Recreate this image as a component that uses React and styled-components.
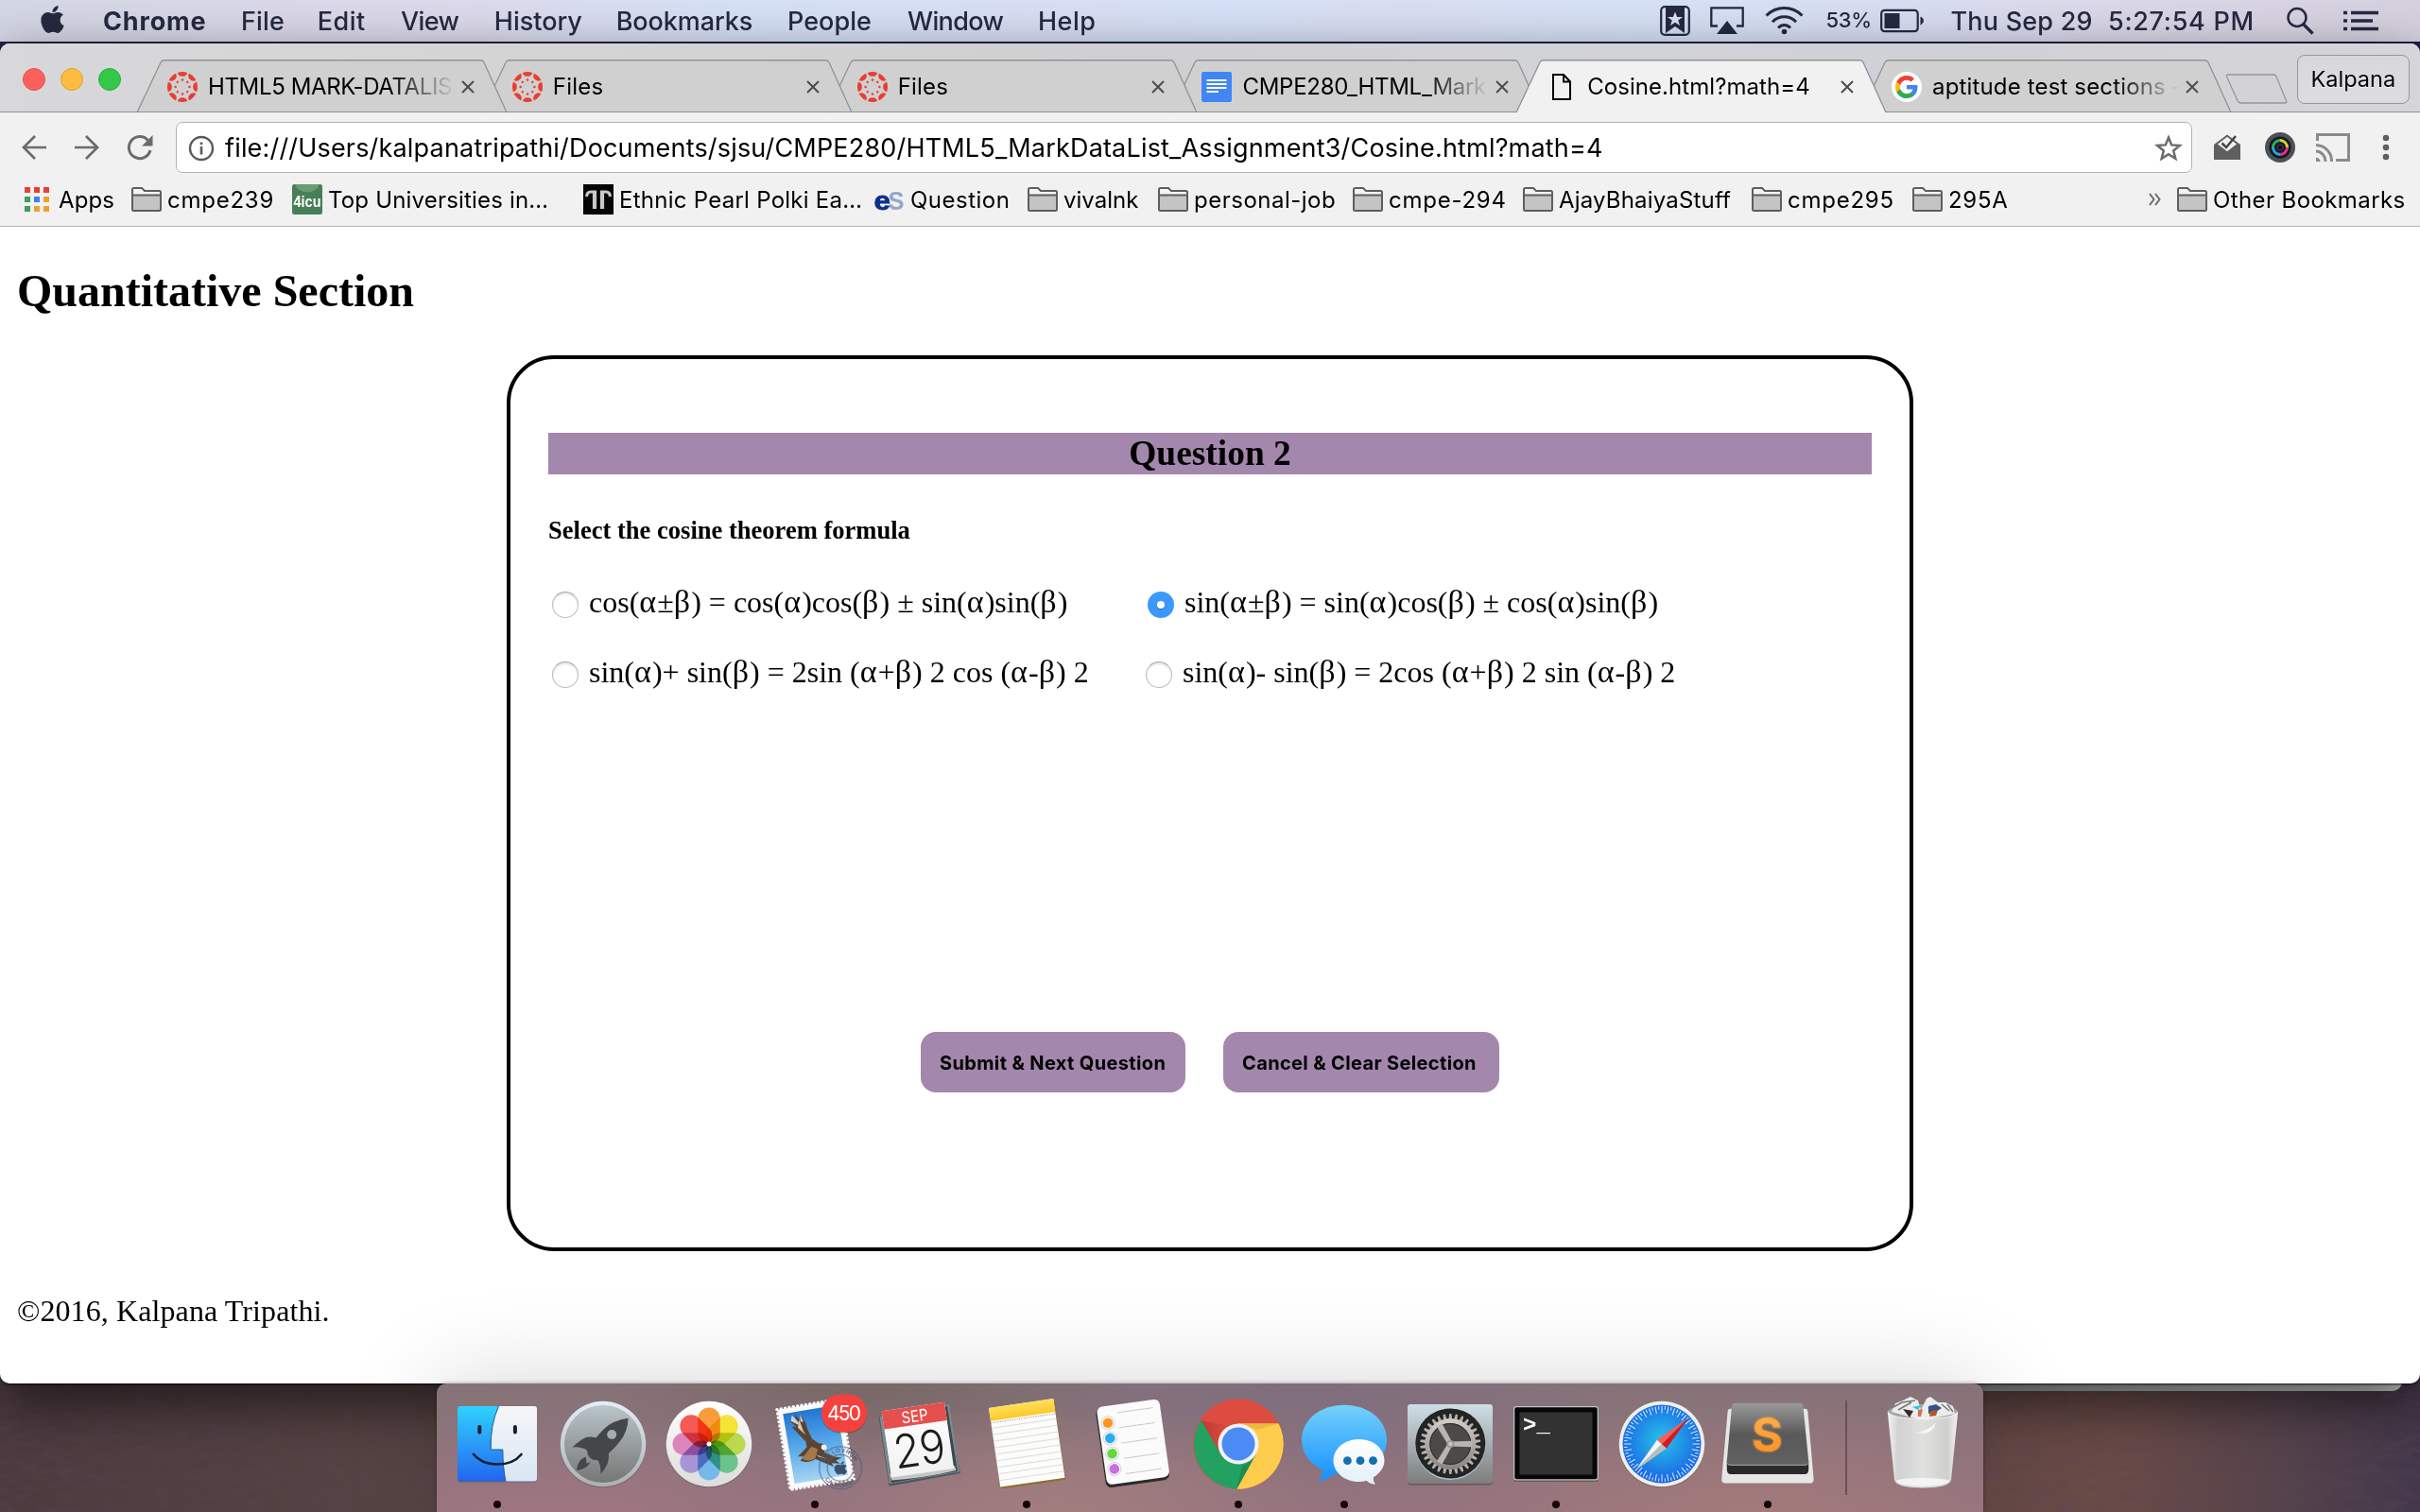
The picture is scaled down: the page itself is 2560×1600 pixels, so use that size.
import React from 'react';
import styled, { createGlobalStyle, css } from 'styled-components';
import { FaApple } from 'react-icons/fa';

const Global = createGlobalStyle`
  * { box-sizing: border-box; }
  body { margin: 0; overflow: hidden; background: #4b3a3b; }
  svg { display: block; flex: none; }
`;

const ui = css`font-family: Inter, "Liberation Sans", sans-serif;`;
const serif = css`font-family: "Liberation Serif", "Times New Roman", serif;`;

const Desktop = styled.div`
  position: relative;
  width: 2560px;
  height: 1600px;
  overflow: hidden;
  display: flex;
  flex-direction: column;
  background:
    linear-gradient(90deg, #1f2547 0, #2a2145 400px, #1d2a4c 1200px, #241f45 2560px) top / 100% 80px no-repeat,
    linear-gradient(90deg, #4c3a3e 0, #584543 500px, #5d4644 1600px, #6a4b46 2250px, #54424a 2420px, #43374a 100%);
`;

const Wallpaper = styled.svg`
  position: absolute;
  left: 0;
  bottom: 0;
`;

/* ---------- menu bar ---------- */

const MenuBar = styled.header`
  ${ui}
  height: 44px;
  margin-bottom: 2px;
  display: flex;
  align-items: center;
  padding-left: 43px;
  font-size: 27px;
  line-height: 33px;
  color: #262a42;
  white-space: pre;
  position: relative;
  background: linear-gradient(90deg, #d4d7e4 0, #dbd9e9 300px, #ddd9ea 440px, #d6e1f6 780px, #d9dff4 1150px, #d6e2f7 1300px, #dadff3 1450px, #d7e2f6 1720px, #d8def2 2000px, #dcd8e8 2250px, #d6d1df 2560px);
`;

const AppleSlot = styled.div`
  width: 66px;
  display: flex;
`;

const AppleMark = styled(FaApple)`
  margin: -4px 0 0 -4px;
`;

const MenuItem = styled.span`
  width: ${(p) => p.$w}px;
  font-weight: ${(p) => (p.$bold ? 700 : 500)};
  letter-spacing: ${(p) => p.$ls || 0}px;
`;

const StatusArea = styled.div`
  display: flex;
  align-items: center;
  margin-left: auto;
  padding-right: 44px;
`;

const StatusIcon = styled.svg`
  margin-right: ${(p) => p.$gap || 0}px;
`;

const Percent = styled.span`
  font-size: 22px;
  font-weight: 500;
  width: 57px;
  letter-spacing: -0.3px;
  padding-bottom: 1px;
`;

const Clock = styled.span`
  font-weight: 500;
  width: ${(p) => p.$w}px;
  letter-spacing: ${(p) => p.$ls}px;
`;

/* ---------- browser window ---------- */

const Window = styled.main`
  position: relative;
  z-index: 1;
  height: 1418px;
  display: flex;
  flex-direction: column;
  border-radius: 10px;
  background: #fff;
  box-shadow: 0 1px 2px rgba(0, 0, 0, 0.8), 0 20px 60px rgba(0, 0, 0, 0.62);
`;

const TabStrip = styled.div`
  ${ui}
  height: 73px;
  display: flex;
  align-items: flex-end;
  padding-left: 24px;
  border-radius: 10px 10px 0 0;
  background: linear-gradient(90deg, #d8d8da 0, #d3d3d4 700px, #cfcfd1 1200px, #d2d3d7 1600px, #d0d1d6 2100px, #d6d5d9 2560px);
  box-shadow: inset 0 -1px #929294;
  font-size: 24px;
  line-height: 28px;
`;

const Lights = styled.div`
  display: flex;
  gap: 16px;
  width: 121px;
  padding-bottom: 23px;
`;

const Light = styled.i`
  width: 24px;
  height: 24px;
  border-radius: 50%;
  background: ${(p) => p.$c};
  border: 1px solid ${(p) => p.$b};
`;

const TabBox = styled.div`
  position: relative;
  z-index: ${(p) => p.$z};
  width: 391px;
  height: 56px;
  margin-right: -26.2px;
  padding: 0 32px 0 32px;
  display: flex;
  align-items: center;
  flex: none;
`;

const TabShape = styled.svg`
  position: absolute;
  left: 0;
  top: 0;
  overflow: visible;
`;

const Favicon = styled.div`
  position: relative;
  width: 32px;
  height: 32px;
  margin: 2px 11px 0 0;
  display: flex;
  align-items: center;
  justify-content: center;
  flex: none;
`;

const TabTitle = styled.span`
  position: relative;
  width: 262px;
  white-space: nowrap;
  color: #000;
  padding-top: 1px;
  letter-spacing: ${(p) => p.$ls}px;
  ${(p) => p.$fade && css`
    mask-image: linear-gradient(90deg, #000 192px, transparent 262px);
  `}
`;

const CloseMark = styled.svg`
  position: relative;
  margin: 2px 0 0 6px;
`;

const NewTab = styled.svg`
  margin: 0 0 9px 20px;
  position: relative;
`;

const ProfileButton = styled.button`
  ${ui}
  width: 119px;
  height: 52px;
  margin: 0 9px 9px 10px;
  padding: 0 0 1px 0;
  border: 1.5px solid #97979b;
  border-radius: 8px;
  background: linear-gradient(#d8d8db, #dddce0);
  font-size: 23.5px;
  text-shadow: 0 1px #f4f4f4;
  color: #000;
`;

const Toolbar = styled.div`
  ${ui}
  height: 68px;
  padding: 6px 0 0 22px;
  display: flex;
  align-items: center;
  background: #f1f1f1;
`;

const NavIcon = styled.svg`
  margin-right: ${(p) => p.$gap}px;
`;

const Address = styled.div`
  width: 2133px;
  height: 54px;
  margin-left: auto;
  padding: 1px 9px 0 12px;
  display: flex;
  align-items: center;
  border: 1.5px solid #b3b3b3;
  border-radius: 7px;
  background: #fff;
  font-size: 27px;
  line-height: 32px;
  letter-spacing: 0.18px;
  color: #000;
`;

const Url = styled.span`
  flex: 1;
  padding-left: 11px;
  white-space: nowrap;
`;

const Extensions = styled.div`
  width: 241px;
  padding-left: 22px;
  display: flex;
  align-items: center;
`;

const Bookmarks = styled.nav`
  ${ui}
  height: 53px;
  display: flex;
  align-items: center;
  padding: 0 0 4px 24px;
  background: #f1f1f1;
  border-bottom: 1.5px solid #b4b4b4;
  font-size: 24px;
  line-height: 28px;
  color: #000;
  white-space: nowrap;
`;

const Bookmark = styled.div`
  display: flex;
  align-items: center;
  width: ${(p) => p.$w}px;
  flex: none;
`;

const BookmarkName = styled.span`
  padding-left: 6px;
  padding-top: 1px;
  letter-spacing: ${(p) => p.$ls}px;
`;

/* ---------- page ---------- */

const Page = styled.section`
  ${serif}
  flex: 1;
  padding: 40px 18px 0;
  font-size: 32px;
  line-height: 37px;
  color: #000;
`;

const Title = styled.h1`
  margin: 0 0 41px;
  font-size: 48px;
  line-height: 55px;
`;

const Card = styled.section`
  width: 1488px;
  height: 948px;
  margin: 0 auto;
  padding: 78px 40px 164px;
  border: 4px solid #000;
  border-radius: 50px;
  display: flex;
  flex-direction: column;
`;

const Banner = styled.h3`
  margin: 0 0 44px;
  height: 44px;
  background: #a387ad;
  text-align: center;
  font-size: 37.44px;
  line-height: 44px;
`;

const Prompt = styled.h5`
  margin: 0 0 44px;
  font-size: 26.56px;
  line-height: 30px;
`;

const OptionRow = styled.div`
  display: grid;
  grid-template-columns: ${(p) => p.$first}px 1fr;
  grid-template-rows: 40px;
  height: 40px;
  margin: 0 0 34px 4px;
`;

const Option = styled.label`
  display: flex;
  align-items: center;
  gap: 11px;
  height: 40px;
  white-space: nowrap;
`;

const Radio = styled.span`
  width: 28px;
  height: 28px;
  border-radius: 50%;
  display: flex;
  align-items: center;
  justify-content: center;
  border: 1.5px solid #bdbdbd;
  border-top-color: #a5a5a5;
  background: #fff;
  box-shadow: inset 0 2px 2px rgba(0, 0, 0, 0.1);
  ${(p) => p.$on && css`
    border: 0;
    background: #3b99fc;
    box-shadow: none;
    &::after {
      content: '';
      width: 8px;
      height: 8px;
      border-radius: 50%;
      background: #fff;
      box-shadow: 0 1px 1px rgba(0, 0, 0, 0.3);
    }
  `}
`;

const Formula = styled.span`
  height: 40px;
  line-height: 34px;
`;

const Greek = styled.span`
  font-size: 34px;
  line-height: 1;
  letter-spacing: 1.1px;
`;

const Actions = styled.div`
  margin-top: auto;
  display: flex;
  justify-content: center;
  gap: 40px;
`;

const Action = styled.button`
  ${ui}
  width: ${(p) => p.$w}px;
  height: 64px;
  padding: 1px 0 0 20px;
  border: 0;
  border-radius: 16px;
  background: #a387ad;
  color: #000;
  font-size: 20px;
  font-weight: 700;
  letter-spacing: 0.36px;
  text-align: left;
  white-space: nowrap;
`;

const Copyright = styled.footer`
  margin-top: 45px;
  letter-spacing: 0.1px;
`;

/* ---------- dock ---------- */

const BackWindow = styled.div`
  position: absolute;
  left: 1900px;
  top: 1440px;
  width: 641px;
  height: 32px;
  border-radius: 0 0 10px 10px;
  background: linear-gradient(90deg, #868a86, #b9bcb8 60%, #d6d9d4);
`;

const Dock = styled.footer`
  ${ui}
  position: relative;
  z-index: 2;
  width: 1636px;
  height: 136px;
  margin: 0 auto;
  padding: 8px 0 0 8px;
  display: flex;
  border-radius: 10px 10px 0 0;
  background:
    radial-gradient(ellipse 300px 110px at 8% 110%, rgba(165, 120, 130, 0.7), transparent),
    radial-gradient(ellipse 300px 120px at 40% 105%, rgba(170, 130, 125, 0.7), transparent),
    radial-gradient(ellipse 360px 120px at 85% 105%, rgba(170, 125, 120, 0.7), transparent),
    radial-gradient(ellipse 340px 100px at 56% 0%, rgba(125, 108, 128, 0.8), transparent),
    radial-gradient(ellipse 300px 90px at 28% 0%, rgba(118, 100, 98, 0.8), transparent),
    linear-gradient(#867378, #94737f);
  box-shadow: 0 0 100px rgba(0, 0, 0, 0.17), 0 0 4px rgba(0, 0, 0, 0.35);
`;

const DockItem = styled.div`
  width: 112px;
  display: flex;
  flex-direction: column;
  align-items: center;
  gap: 4px;
  flex: none;
`;

const Running = styled.i`
  width: 8px;
  height: 8px;
  border-radius: 50%;
  background: #150308;
`;

const Separator = styled.i`
  width: 2px;
  height: 100px;
  margin: 10px 24px 0 26px;
  background: #6b5057;
`;

/* ---------- small icons ---------- */

const Canvas = () => (
  <svg width="32" height="32" viewBox="-16 -16 32 32">
    {[0, 45, 90, 135, 180, 225, 270, 315].map((a) => (
      <g key={a} transform={`rotate(${a})`} fill="#e83e30">
        <path d="M-5.2 -15.1 A16 16 0 0 1 5.2 -15.1 A5.4 5.4 0 0 1 -5.2 -15.1Z" />
        <circle cy="-7.4" r="1.25" />
      </g>
    ))}
  </svg>
);

const DocsIcon = () => (
  <svg width="32" height="32" viewBox="0 0 32 32">
    <rect width="32" height="32" rx="2" fill="#4285f4" />
    <path d="M5.500 9h21M5.500 13h21M5.500 17h21M5.500 21h12.500" stroke="#fff" strokeWidth="2" />
  </svg>
);

const PageIcon = () => (
  <svg width="22" height="30" viewBox="0 0 22 30">
    <path d="M2 2H13L20 9.500V28H2Z M13 2V9.500H20" fill="none" stroke="#000" strokeWidth="2" />
  </svg>
);

const GoogleIcon = () => (
  <svg width="32" height="32" viewBox="0 0 32 32">
    <circle cx="16" cy="16" r="16" fill="#fff" />
    <g transform="translate(4 4)">
      <path d="M23.490 12.270c0-.79-.07-1.540-.19-2.270H12v4.510h6.470c-.29 1.480-1.140 2.730-2.400 3.580v3h3.860c2.260-2.090 3.560-5.170 3.560-8.820z" fill="#4285f4" />
      <path d="M12 24c3.240 0 5.950-1.080 7.930-2.910l-3.860-3c-1.080.72-2.450 1.160-4.070 1.160-3.130 0-5.780-2.110-6.730-4.960H1.290v3.090C3.260 21.300 7.310 24 12 24z" fill="#34a853" />
      <path d="M5.270 14.290c-.25-.72-.38-1.490-.38-2.290s.14-1.570.38-2.290V6.620H1.290C.47 8.240 0 10.060 0 12s.47 3.760 1.290 5.380l3.980-3.090z" fill="#fbbc05" />
      <path d="M12 4.750c1.770 0 3.350.61 4.600 1.800l3.420-3.420C17.950 1.190 15.240 0 12 0 7.310 0 3.260 2.700 1.290 6.620l3.980 3.090C6.220 6.860 8.870 4.750 12 4.750z" fill="#ea4335" />
    </g>
  </svg>
);

const FolderIcon = () => (
  <svg width="32" height="26" viewBox="0 0 32 26">
    <path d="M1 23.500V2.500Q1 1 2.500 1H11L14 4H29.500Q31 4 31 5.500V23.500Q31 25 29.500 25H2.500Q1 25 1 23.500Z" fill="#f4f4f4" stroke="#5e5e5e" strokeWidth="2" />
    <path d="M2 9H30V24H2Z" fill="#c4c4c4" />
    <path d="M1 8.500H31" stroke="#5e5e5e" strokeWidth="2" />
  </svg>
);

const AppsIcon = () => {
  const c = ['#ea3d38', '#ea3d38', '#ea3d38', '#3c9f5b', '#3c82f0', '#efa12e', '#3c9f5b', '#efa12e', '#efa12e'];
  return (
    <svg width="32" height="26" viewBox="0 0 32 26">
      {c.map((f, i) => (
        <rect key={i} x={2 + (i % 3) * 10} y={Math.floor(i / 3) * 10} width="6" height="6" fill={f} />
      ))}
    </svg>
  );
};

const FourIcu = () => (
  <svg width="32" height="32" viewBox="0 0 32 32">
    <rect width="32" height="32" rx="2.500" fill="#477f56" />
    <path d="M3 0H29Q26 8 16 8.500Q6 8 3 0Z" fill="#6b9a75" />
    <text x="16" y="24" textAnchor="middle" textLength="29" lengthAdjust="spacingAndGlyphs" fontFamily="Liberation Sans, sans-serif" fontWeight="700" fontSize="17" fill="#fff">4icu</text>
  </svg>
);

const EthnicIcon = () => (
  <svg width="32" height="32" viewBox="0 0 32 32">
    <rect width="32" height="32" fill="#060606" />
    <g fill="none" stroke="#c9c9c9">
      <path d="M3.500 13Q4 8 8 8H14M28.500 13Q28 8 24 8H18" strokeWidth="3.200" />
      <path d="M12 7V26M20 7V26" strokeWidth="4.200" />
    </g>
  </svg>
);

const EsIcon = () => (
  <svg width="32" height="32" viewBox="0 0 32 32">
    <text x="14.500" y="27" textLength="17" lengthAdjust="spacingAndGlyphs" fontFamily="Liberation Sans, sans-serif" fontWeight="700" fontSize="28" fill="#94a5cd">S</text>
    <text x="-.5" y="27" textLength="17.500" lengthAdjust="spacingAndGlyphs" fontFamily="Liberation Sans, sans-serif" fontWeight="700" fontSize="28" fill="#0d2f8c" stroke="#0d2f8c" strokeWidth=".8">e</text>
  </svg>
);

/* ---------- dock icons, each on a 112 x 112 board ---------- */

const Board = ({ children }) => (
  <svg width="112" height="112" viewBox="0 0 112 112" overflow="visible">{children}</svg>
);

const Grad = ({ id, stops }) => (
  <linearGradient id={id} x1="0" y1="0" x2="0" y2="1">
    {stops.map((s, i) => <stop key={i} offset={i / (stops.length - 1)} stopColor={s} />)}
  </linearGradient>
);

const Finder = () => (
  <Board>
    <defs><Grad id="fa" stops={['#2fd3ff', '#2a9cf6', '#2166ee']} /><Grad id="fb" stops={['#f6f6f8', '#d8e6f3']} /></defs>
    <rect x="14" y="17" width="84" height="79.500" rx="3" fill="#0003" />
    <rect x="14" y="16" width="84" height="79.500" rx="3" fill="url(#fa)" />
    <path d="M57.500 16H95Q98 16 98 19V92.500Q98 95.500 95 95.500H65Q62 82 61.800 62H49.200Q48.500 36 57.500 16Z" fill="url(#fb)" />
    <path d="M57.500 16Q48.500 36 49.200 62H61.800Q62 82 65 95.500" fill="none" stroke="#1c5c93" strokeWidth="1" />
    <g stroke="#15202c" fill="none" strokeLinecap="round">
      <path d="M37.300 38V43.500M74.900 38V43.500" strokeWidth="4" />
      <path d="M31 67Q40 77.500 56.500 77.500Q73 77.500 81.500 67" strokeWidth="2.600" />
    </g>
  </Board>
);

const Launchpad = () => (
  <Board>
    <defs><Grad id="la" stops={['#e2f0f6', '#aab0b3']} /><Grad id="lb" stops={['#b9c5ca', '#777675']} /></defs>
    <circle cx="56" cy="57" r="45.300" fill="#0003" />
    <circle cx="56" cy="56" r="45.300" fill="url(#la)" />
    <circle cx="56" cy="56" r="41" fill="url(#lb)" />
    <path d="M82.600 28.700Q66 31 57 40Q52 45 48.500 49.500Q40 47 34 51Q28 55 23.500 59.500Q31 58.500 36 61Q40 62.500 39.500 66.500Q42 72 46.500 73Q50.500 72 51.500 75Q54 80 53.300 88Q58 83 60.500 77Q62.500 71 61.800 66Q68 61 74 53Q82 43 82.600 28.700Z" fill="#43474a" />
    <path d="M37.500 69.500Q29 73 28 84Q38 83 42.500 75.500L38.500 76.500Z" fill="#43474a" />
    <circle cx="65.200" cy="46" r="5" fill="#a5adb0" />
  </Board>
);

const PetalGroup = styled.g`
  isolation: isolate;
  rect { mix-blend-mode: multiply; }
`;

const Photos = () => (
  <Board>
    <defs><Grad id="pa" stops={['#ffffff', '#dcdcdb']} /></defs>
    <circle cx="56" cy="57" r="45.300" fill="#0003" />
    <circle cx="56" cy="56" r="45.300" fill="url(#pa)" />
    <PetalGroup transform="translate(56 56)">
      {['#f99c3a', '#f4e437', '#bcd84f', '#6cc48c', '#74b9ea', '#a694d4', '#da86bb', '#f55a55'].map((c, i) => (
        <rect key={c} x="-11.800" y="-38.500" width="23.600" height="38.500" rx="11.800" fill={c} transform={`rotate(${i * 45})`} />
      ))}
    </PetalGroup>
    <circle cx="56" cy="56" r="2.500" fill="#fff" />
  </Board>
);

const Mail = () => (
  <Board>
    <defs>
      <Grad id="ma" stops={['#2276d2', '#58a8ea', '#a5d5f2']} />
      <path id="ring" d="M66.700 81.300A16.500 16.500 0 0 1 99.700 81.300" />
      <path id="ringb" d="M62.500 81.300A20.700 20.700 0 0 0 103.900 81.300" />
    </defs>
    <g transform="rotate(-9.500 56 56)">
      <rect x="23" y="14" width="67" height="85" fill="#fafafa" />
      <rect x="22.500" y="13.500" width="68" height="86" fill="none" stroke="#fafafa" strokeWidth="3.400" strokeDasharray="0 4.400" strokeLinecap="round" />
      <rect x="28" y="19" width="57" height="75" fill="url(#ma)" />
      <path d="M37 22L41 29L40 21L45 29L45.500 22L50 32L51 40L54 50L60 56Q66 57 68 61L64 66Q72 73 82 75L75 77L79 81L70 79L72 83L62 77L54 72Q46 76 38 71L42 67L36 66L47 58L47 52L40 42L35 34L40 35L34 28L40 30Z" fill="#5b4433" />
      <path d="M44 28L46 40L50 50L48 45L41 36Z M55 67L66 74L72 77L58 70Z" fill="#d9cbb9" />
      <path d="M37 22L43 31L42 33L35 28Z M45.500 22L48 31L45 30Z" fill="#cfd2d3" />
      <path d="M40 69L52 58L58 62L54 71Q47 75 40 69Z" fill="#a57a4a" />
      <circle cx="65" cy="61" r="3" fill="#f2efe9" />
    </g>
    <g fill="none" stroke="#4c5b78" opacity=".55">
      <circle cx="83.200" cy="81.300" r="22.500" strokeWidth="1.500" />
      <circle cx="83.200" cy="81.300" r="14" strokeWidth="1.500" />
    </g>
    <g fill="#46536e" opacity=".8" fontFamily="Liberation Sans, sans-serif" fontWeight="700" fontSize="6">
      <text><textPath href="#ring" startOffset="5">HELLO FROM</textPath></text>
      <text><textPath href="#ringb" startOffset="13">CALIFORNIA</textPath></text>
    </g>
    <g transform="translate(76.500 73.500) scale(.036 .031)" fill="#3c5170">
      <path d="M318.700 268.700c-.2-36.700 16.400-64.400 50-84.800-18.800-26.900-47.200-41.700-84.700-44.600-35.500-2.800-74.300 20.700-88.500 20.700-15 0-49.400-19.700-76.400-19.700C63.300 141.200 4 184.800 4 273.500q0 39.300 14.400 81.200c12.800 36.700 59 126.700 107.200 125.200 25.200-.6 43-17.900 75.800-17.900 31.800 0 48.300 17.900 76.400 17.900 48.600-.7 90.400-82.500 102.600-119.300-65.200-30.700-61.700-90-61.700-91.900zm-56.600-164.200c27.300-32.400 24.800-61.900 24-72.500-24.100 1.400-52 16.400-67.900 34.900-17.500 19.800-27.800 44.300-25.600 71.900 26.100 2 49.900-11.400 69.500-34.300z" />
    </g>
    <rect x="63" y="4.500" width="48" height="40" rx="20" fill="#0004" />
    <rect x="63" y="3.500" width="48" height="40" rx="20" fill="#f5413d" />
    <text x="87" y="31" textAnchor="middle" textLength="36" fontSize="21" fill="#fff">450</text>
  </Board>
);

const Calendar = () => (
  <Board>
    <defs><Grad id="ca" stops={['#fff', '#f1f1f1']} /></defs>
    <path d="M11.500 26.700L84 14L98 87L22.600 100.700Z" fill="#4c585f" />
    <path d="M12.500 27L22.900 98L97 85.500L86 14Z" fill="#7b8a93" />
    <path d="M16 30L25 97L95 85L84 16Z" fill="#3d474d" />
    <path d="M23 88L92 79L93.500 84Q60 92 25.500 94.500Z" fill="#c5c5c5" />
    <g transform="rotate(-8.200 14.700 21.300)">
      <rect x="14.700" y="21.300" width="67" height="71" fill="url(#ca)" />
      <rect x="14.700" y="21.300" width="67" height="19.500" fill="#e4504d" />
      <text x="48.500" y="37.500" textAnchor="middle" textLength="28" lengthAdjust="spacingAndGlyphs" fontSize="17" fill="#fff">SEP</text>
      <text x="48.500" y="84" textAnchor="middle" textLength="55" lengthAdjust="spacingAndGlyphs" fontSize="49" fontWeight="300" fill="#1b1b1b">29</text>
    </g>
  </Board>
);

const Notes = () => (
  <Board>
    <defs><Grad id="na" stops={['#ffdf5a', '#fcc92a']} /></defs>
    <g transform="rotate(-8.300 16 18)">
      <rect x="16.500" y="19" width="69" height="85.500" fill="#8e6f25" />
      <rect x="16" y="18" width="69" height="84.500" fill="#fcfcfb" />
      <rect x="16" y="18" width="69" height="14" fill="url(#na)" />
      <path d="M16 34H85" stroke="#888" strokeWidth="1" strokeDasharray="1 1.500" />
      {[0, 1, 2, 3, 4, 5, 6, 7, 8].map((i) => <path key={i} d={`M16 ${39.500 + i * 7}H85`} stroke="#d3d3d3" strokeWidth=".8" />)}
    </g>
  </Board>
);

const Reminders = () => (
  <Board>
    <g transform="rotate(-8 17.300 18)">
      <rect x="16.500" y="19" width="68" height="84.500" rx="6" fill="#2b2b2d" />
      <rect x="17.800" y="17.500" width="67" height="83" rx="6" fill="#fbfbfb" />
      {['#fe9427', '#2aaaf3', '#65d83c', '#c771df'].map((c, i) => (
        <g key={c}>
          <circle cx="27.700" cy={35.300 + i * 16.400} r="7" fill="#fff" stroke="#d2d2d2" strokeWidth="1" />
          <circle cx="27.700" cy={35.300 + i * 16.400} r="5.300" fill={c} />
          <path d={`M39 ${42 + i * 16.400}H77`} stroke="#c6c6c6" strokeWidth=".9" />
        </g>
      ))}
      <path d="M39 26H77" stroke="#c6c6c6" strokeWidth=".9" />
    </g>
  </Board>
);

const ChromeIcon = () => (
  <Board>
    <defs>
      <linearGradient id="cr" x1="0" x2="1"><stop offset="0" stopColor="#b8392f" stopOpacity=".9" /><stop offset="1" stopColor="#b8392f" stopOpacity="0" /></linearGradient>
    </defs>
    <circle cx="56" cy="56" r="47.700" fill="#dc4c40" />
    <path d="M98.500 34.300A47.700 47.700 0 0 1 54.200 103.700L74.600 66.700L56 34.300Z" fill="#ffcd4d" />
    <path d="M16.500 30.500A47.700 47.700 0 0 0 54.200 103.700L74.600 66.700L56 56L37.400 66.700Z" fill="#22a160" />
    <path d="M16.700 31.300L37.400 66.700L36 45L46 37Z" fill="url(#cr)" />
    <path d="M74.600 66.700L54.200 103.700L60 80L70 74Z" fill="#137a43" opacity=".5" />
    <path d="M56 34.300H98.300L76 41Z" fill="#c89220" opacity=".35" />
    <circle cx="56" cy="56" r="21.500" fill="#f2f2f2" />
    <circle cx="56" cy="56" r="17.500" fill="#4c8bf5" />
  </Board>
);

const Messages = () => (
  <Board>
    <defs><Grad id="mb" stops={['#74d2fb', '#1690ff']} /><Grad id="mw" stops={['#ffffff', '#e3eff8']} /></defs>
    <path d="M56 14.700C82 14.700 101 31 101 51.500S82 88.500 56 88.500Q50 88.500 45 87.500Q38 94.500 27.500 95Q33 91 33 83.500C19 77 11 65 11 51.500C11 31 30 14.700 56 14.700Z" fill="url(#mb)" />
    <path d="M71.500 51C87 51 98.500 61 98.500 73.500C98.500 80.500 94 87 87 91Q86 95 89 98.700Q82.500 98 79.500 94.700Q76 96 71.500 96C56.500 96 44.500 86 44.500 73.500S56.500 51 71.500 51Z" fill="url(#mw)" />
    {[59.400, 73, 86.500].map((x) => <circle key={x} cx={x} cy="73.700" r="4.400" fill="#156eb0" />)}
  </Board>
);

const Preferences = () => (
  <Board>
    <defs><Grad id="sa" stops={['#cfdfe7', '#7d7d7c']} /><Grad id="sb" stops={['#cfcbc8', '#8b8784']} /></defs>
    <rect x="11" y="15.500" width="90" height="84" rx="3" fill="#0004" />
    <rect x="11" y="14" width="90" height="84" rx="3" fill="url(#sa)" />
    <circle cx="56.300" cy="56.500" r="37.500" fill="#a9c0d3" />
    <circle cx="56.300" cy="55.500" r="37" fill="#242423" />
    <g transform="translate(56.300 56)">
      {Array.from({ length: 30 }, (_, i) => (
        <path key={i} d="M-1.900 -26L-1.100 -32H1.100L1.900 -26Z" fill="#b5b1ae" transform={`rotate(${i * 12})`} />
      ))}
      <circle r="24.500" fill="#4b4a49" stroke="url(#sb)" strokeWidth="5" />
      <circle r="21.500" fill="none" stroke="#2c2b2b" strokeWidth="1" />
      {[90, 210, 330].map((a) => <path key={a} d="M-2.500 0L-3.200 -23H3.200L2.500 0Z" fill="#b9b5b2" transform={`rotate(${a})`} />)}
      <circle r="4" fill="#9b9896" />
      <circle r="2.200" fill="#c9c7c6" />
    </g>
  </Board>
);

const Terminal = () => (
  <Board>
    <rect x="11" y="17.500" width="90" height="78.500" rx="3" fill="#0004" />
    <rect x="11" y="16" width="90" height="78.500" rx="3" fill="#b9c3ca" />
    <rect x="12.300" y="17.300" width="87.400" height="76" rx="2" fill="#070707" />
    <rect x="17.500" y="22.500" width="77" height="66" fill="#323232" />
    <text x="21" y="42.500" textLength="29" fontFamily="Liberation Mono, monospace" fontWeight="700" fontSize="24" fill="#fff">&gt;_</text>
  </Board>
);

const Safari = () => (
  <Board>
    <defs>
      <radialGradient id="sf" cx=".5" cy=".45" r=".55"><stop offset="0" stopColor="#27c3e8" /><stop offset="1" stopColor="#1963e6" /></radialGradient>
    </defs>
    <circle cx="56" cy="57" r="45.300" fill="#0003" />
    <circle cx="56" cy="56" r="45.300" fill="#eeeff0" />
    <circle cx="56" cy="56" r="41.500" fill="url(#sf)" />
    <g transform="translate(56 56)" stroke="#d9ecfb">
      {Array.from({ length: 72 }, (_, i) => (
        <path key={i} d={i % 2 ? 'M0 -40V-36.500' : 'M0 -40V-32.500'} strokeWidth="1" transform={`rotate(${i * 5})`} />
      ))}
    </g>
    <path d="M84.400 28L50.900 51.800L56 56.200Z" fill="#ff5b56" />
    <path d="M84.400 28L60.900 60.700L56 56.200Z" fill="#d11a22" />
    <path d="M28 84L50.900 51.800L56 56.200Z" fill="#f5f5f5" />
    <path d="M28 84L60.900 60.700L56 56.200Z" fill="#bdbdbd" />
  </Board>
);

const Sublime = () => (
  <Board>
    <defs>
      <Grad id="su" stops={['#9a9a9a', '#7b7b7b', '#5a5a5a', '#5c5c5c', '#626262']} />
      <Grad id="ss" stops={['#f9b95a', '#fd8a1e']} />
    </defs>
    <path d="M16.500 18.700H95.500Q98 18.700 98.300 21L104.600 93Q104.800 97.500 101 97.500H11Q7 97.500 7.300 93L13.700 21Q14 18.700 16.500 18.700Z" fill="#e6e6e6" />
    <path d="M12.800 74H99.200V83Q99.200 88 95 88H17Q12.800 88 12.800 83Z" fill="#2a2a2a" />
    <path d="M22 12.700H90Q93 12.700 93.400 16L99.200 74Q99.500 78.500 95.500 78.500H16.500Q12.500 78.500 12.800 74L18 16Q18.500 12.700 22 12.700Z" fill="url(#su)" />
    <path d="M13.500 77Q14.500 78.300 17 78.300H95Q97.500 78.300 98.500 77" fill="none" stroke="#aaa" strokeWidth="1" />
    <text x="55.300" y="63.500" textAnchor="middle" fontFamily="Inter, sans-serif" fontWeight="700" fontSize="50" fill="url(#ss)" stroke="#ff9a33" strokeOpacity=".3" strokeWidth="3">S</text>
  </Board>
);

const Trash = () => (
  <Board>
    <defs>
      <linearGradient id="tr" x1="0" x2="1"><stop offset="0" stopColor="#f4f4f4" /><stop offset=".15" stopColor="#d2d2d2" /><stop offset=".5" stopColor="#e0e0df" /><stop offset=".85" stopColor="#cfcfce" /><stop offset="1" stopColor="#f5f5f5" /></linearGradient>
    </defs>
    <ellipse cx="56" cy="22" rx="37.200" ry="8" fill="#a7a5a5" />
    <path d="M23 22L27 13L35 10L43 6L51 10L54 20L60 8L64 6L72 12L80 12L88 16L90 24L56 31Z" fill="#ececec" />
    <path d="M25 17L34 12L48 10M30 20L44 12M76 14L84 21M82 14L88 22" stroke="#777" strokeWidth="1.500" fill="none" />
    <path d="M35 19L46 21L42 28Z" fill="#3a2c2c" />
    <path d="M45 17L54 15L51 20Z" fill="#22c7e8" />
    <path d="M51 20L56 19L54 27L51 27Z" fill="#df6a3c" />
    <path d="M62 16L70 14L76 18L70 22L62 24Z" fill="#31518f" />
    <path d="M64 21L72 20L70 26L63 27Z" fill="#b5542c" />
    <path d="M18.800 22Q24 29.500 56 29.500Q88 29.500 93.200 22L86 94Q84 102.500 56 102.500Q28 102.500 26 94Z" fill="url(#tr)" />
    <path d="M46 44Q60 44 70 33Q68 43 58 45Z" fill="#f5f5f5" />
    <path d="M27.500 95Q30 100.500 56 100.500Q82 100.500 84.500 95Q80 92 56 92Q32 92 27.500 95Z" fill="#f8f8f8" opacity=".85" />
    <path d="M18.800 22Q24 29.500 56 29.500Q88 29.500 93.200 22" fill="none" stroke="#f7f7f7" strokeWidth="1" />
  </Board>
);

/* ---------- data ---------- */

const menus = [
  ['Chrome', 146, 0.84, true], ['File', 80.700, 0.16], ['Edit', 88.300, 0.5], ['View', 98.800, -0.65], ['History', 128.900, 0],
  ['Bookmarks', 181.300, -0.09], ['People', 127, 0.06], ['Window', 138, -0.65], ['Help', 90, 0.5],
];

const tabs = [
  { title: 'HTML5 MARK-DATALIS', icon: Canvas, ls: -0.36, fade: true },
  { title: 'Files', icon: Canvas, ls: 0.2 },
  { title: 'Files', icon: Canvas, ls: 0.2 },
  { title: 'CMPE280_HTML_Mark', icon: DocsIcon, ls: -0.28, fade: true },
  { title: 'Cosine.html?math=4', icon: PageIcon, ls: 0.05, active: true },
  { title: 'aptitude test sections -', icon: GoogleIcon, ls: 0.15, fade: true },
];

const bookmarks = [
  ['Apps', AppsIcon, 115, 0.1], ['cmpe239', FolderIcon, 170, 0.75], ['Top Universities in…', FourIcu, 308, 0.18],
  ['Ethnic Pearl Polki Ea…', EthnicIcon, 308, 0.26], ['Question', EsIcon, 162, 0.5], ['vivalnk', FolderIcon, 138, 0],
  ['personal-job', FolderIcon, 206, 0.5], ['cmpe-294', FolderIcon, 180, 0.75], ['AjayBhaiyaStuff', FolderIcon, 242, 0.18],
  ['cmpe295', FolderIcon, 170, 0.75], ['295A', FolderIcon, 250, 0.7],
];

const dock = [
  [Finder, true], [Launchpad], [Photos], [Mail, true], [Calendar], [Notes, true], [Reminders],
  [ChromeIcon, true], [Messages, true], [Preferences], [Terminal, true], [Safari], [Sublime, true],
];

const rows = [
  { first: 630, options: [['cos(α±β) = cos(α)cos(β) ± sin(α)sin(β)', false], ['sin(α±β) = sin(α)cos(β) ± cos(α)sin(β)', true]] },
  { first: 628, options: [['sin(α)+ sin(β) = 2sin (α+β) 2 cos (α-β) 2', false], ['sin(α)- sin(β) = 2cos (α+β) 2 sin (α-β) 2', false]] },
];

const Tab = ({ tab, z }) => {
  const Icon = tab.icon;
  return (
    <TabBox $z={z}>
      <TabShape width="391" height="56" viewBox="0 0 391 56">
        <path d="M0 56L25 3Q26 .75 28.500 .75H363.500Q366 .75 367 3L391 56Z" fill={tab.active ? '#f1f1f1' : '#d0d0d0'} />
        <path d="M0 56L25 3Q26 .75 28.500 .75H363.500Q366 .75 367 3L391 56" fill="none" stroke="#929294" strokeWidth="1.300" />
        {!tab.active && <path d="M0 55.500H391" stroke="#929294" />}
      </TabShape>
      <Favicon><Icon /></Favicon>
      <TabTitle $ls={tab.ls} $fade={tab.fade}>{tab.title}</TabTitle>
      <CloseMark width="14" height="14" viewBox="0 0 14 14"><path d="M1 1L13 13M13 1L1 13" stroke="#4c4c4c" strokeWidth="2" /></CloseMark>
    </TabBox>
  );
};

const renderFormula = (text) =>
  text.split(/([αβ])/).map((part, i) => (/[αβ]/.test(part) ? <Greek key={i}>{part}</Greek> : part));

export default function App() {
  return (
    <>
      <Global />
      <Desktop>
        <Wallpaper width="2560" height="140">
          <defs>
            <filter id="grain" x="0" y="0" width="100%" height="100%">
              <feTurbulence type="fractalNoise" baseFrequency="0.05 0.14" numOctaves="4" seed="7" />
              <feColorMatrix values="0 0 0 0 .1  0 0 0 0 .06  0 0 0 0 .1  1.600 0 0 0 -.62" />
            </filter>
          </defs>
          <rect width="2560" height="140" filter="url(#grain)" opacity=".55" />
        </Wallpaper>
        <BackWindow />

        <MenuBar>
          <AppleSlot><AppleMark size={33} /></AppleSlot>
          {menus.map(([name, w, ls, bold]) => <MenuItem key={name} $w={w} $ls={ls} $bold={bold}>{name}</MenuItem>)}
          <StatusArea>
            <StatusIcon $gap={21} width="32" height="32" viewBox="0 0 32 32">
              <rect x="1.200" y="1.200" width="29.600" height="29.600" rx="4" fill="none" stroke="#262a42" strokeWidth="2.200" />
              <path d="M6 2H26V29L16 22L6 29Z" fill="#262a42" />
              <path d="M16 6.500L18.100 12H24L19.300 15.500L21 21L16 17.700L11 21L12.700 15.500L8 12H13.900Z" fill="#dbe2f4" />
            </StatusIcon>
            <StatusIcon $gap={22} width="36" height="30" viewBox="0 0 36 30">
              <path d="M8 20.500H1.300V1.300H34.700V20.500H28" fill="none" stroke="#262a42" strokeWidth="2.300" />
              <path d="M18 15L29 29H7Z" fill="#262a42" />
            </StatusIcon>
            <StatusIcon $gap={24} width="41" height="30" viewBox="0 0 41 30" fill="none" stroke="#262a42" strokeWidth="3">
              <path d="M1.500 9.500Q9.500 1.500 20.500 1.500T39.500 9.500M8 16.200Q13 10.800 20.500 10.800T33 16.200M14 22.500Q17 19.500 20.500 19.500T27 22.500" />
              <circle cx="20.500" cy="26.500" r="2.800" fill="#262a42" stroke="none" />
            </StatusIcon>
            <Percent>53%</Percent>
            <StatusIcon $gap={29} width="46" height="26" viewBox="0 0 46 26">
              <rect x="1.200" y="1.800" width="38.500" height="22.400" rx="3.500" fill="none" stroke="#262a42" strokeWidth="2.200" />
              <rect x="4.500" y="5" width="16" height="16" fill="#262a42" />
              <path d="M42.500 8.500Q46 10 46 13T42.500 17.500Z" fill="#262a42" />
            </StatusIcon>
            <Clock $w={166.500} $ls={0.21}>Thu Sep 29</Clock>
            <Clock $w={189} $ls={0.7}>5:27:54 PM</Clock>
            <StatusIcon $gap={30} width="30" height="30" viewBox="0 0 30 30" fill="none" stroke="#262a42">
              <circle cx="11" cy="11.500" r="9.500" strokeWidth="2.500" />
              <path d="M17.500 18.500L27.500 28.500" strokeWidth="3.200" />
            </StatusIcon>
            <StatusIcon width="37" height="22" viewBox="0 0 37 22" stroke="#262a42" strokeWidth="3.400">
              <path d="M0 2.500H4M8 2.500H37M0 11H4M8 11H31M0 19.500H4M8 19.500H37" />
            </StatusIcon>
          </StatusArea>
        </MenuBar>

        <Window>
          <TabStrip>
            <Lights>
              <Light $c="#fd605c" $b="#e2504c" />
              <Light $c="#fdbc40" $b="#dfa136" />
              <Light $c="#34c84a" $b="#29ae3c" />
            </Lights>
            {tabs.map((tab, i) => <Tab key={i} tab={tab} z={tab.active ? 9 : 8 - i} />)}
            <NewTab width="66" height="32" viewBox="0 0 66 32">
              <path d="M1.500 3Q.5 1 3 1H51Q53 1 54 3L64.500 28.500Q65.500 31 63 31H17Q14 31 13 28.500Z" fill="#d3d2d5" stroke="#97979b" strokeWidth="1.300" />
            </NewTab>
            <ProfileButton>Kalpana</ProfileButton>
          </TabStrip>

          <Toolbar>
            <NavIcon $gap={28} width="28" height="28" viewBox="0 0 28 28" fill="none" stroke="#6b6b6b" strokeWidth="2.700"><path d="M27 14H3.500M15 2L3 14L15 26" /></NavIcon>
            <NavIcon $gap={28} width="28" height="28" viewBox="0 0 28 28" fill="none" stroke="#6b6b6b" strokeWidth="2.700"><path d="M1 14H24.500M13 2L25 14L13 26" /></NavIcon>
            <NavIcon $gap={0} width="28" height="28" viewBox="0 0 28 28">
              <path d="M22.500 6.500A11.500 11.500 0 1 0 25 17" fill="none" stroke="#6b6b6b" strokeWidth="3" />
              <path d="M27.500 1V12.500H16Z" fill="#6b6b6b" />
            </NavIcon>
            <Address>
              <svg width="28" height="28" viewBox="0 0 28 28">
                <circle cx="14" cy="14" r="12" fill="none" stroke="#5a5a5a" strokeWidth="2.400" />
                <path d="M14 12V20.500M14 7.500V10" stroke="#5a5a5a" strokeWidth="2.600" />
              </svg>
              <Url>file:///Users/kalpanatripathi/Documents/sjsu/CMPE280/HTML5_MarkDataList_Assignment3/Cosine.html?math=4</Url>
              <svg width="30" height="30" viewBox="0 0 30 30">
                <path d="M15 3.500L18.200 11.400L26.800 12L20.200 17.500L22.300 25.800L15 21.200L7.700 25.800L9.800 17.500L3.200 12L11.800 11.400Z" fill="none" stroke="#6b6b6b" strokeWidth="2.500" />
              </svg>
            </Address>
            <Extensions>
              <NavIcon $gap={25} width="30" height="30" viewBox="0 0 30 30">
                <path d="M1 12L15 1.500L29 12V28H1Z" fill="#5f5f5f" />
                <path d="M4 11.500L15 3L26 11.500L15 20Z" fill="#f1f1f1" stroke="#5f5f5f" strokeWidth="1.300" />
                <path d="M9.500 10.500L14 15L24 3" fill="none" stroke="#444" strokeWidth="2.500" />
              </NavIcon>
              <NavIcon $gap={21.500} width="32" height="32" viewBox="-16 -16 32 32">
                <circle r="16" fill="#4c5058" />
                <circle r="11.500" fill="#17171d" />
                <g fill="none" strokeWidth="3">
                  <path d="M-7.500 0A7.500 7.500 0 0 1 0 -7.500" stroke="#28b05c" />
                  <path d="M0 -7.500A7.500 7.500 0 0 1 7.500 0" stroke="#d6d02f" />
                  <path d="M7.500 0A7.500 7.500 0 0 1 0 7.500" stroke="#e2308c" />
                  <path d="M0 7.500A7.500 7.500 0 0 1 -7.500 0" stroke="#2aa7e0" />
                </g>
                <circle r="4" fill="#3a2145" /><circle r="1.600" fill="#000" />
              </NavIcon>
              <NavIcon $gap={34.500} width="36" height="30" viewBox="0 0 36 30" fill="none" stroke="#8b8b8b" strokeWidth="3">
                <path d="M1.500 8V1.500H34.500V28.500H21M0 12.500A17 17 0 0 1 16.500 30M0 19A10.500 10.500 0 0 1 10 30" />
                <path d="M0 25.500A5 5 0 0 1 4.500 30H0Z" fill="#8b8b8b" stroke="none" />
              </NavIcon>
              <svg width="8" height="28" viewBox="0 0 8 28" fill="#5f5f5f"><circle cx="4" cy="4" r="3.300" /><circle cx="4" cy="14" r="3.300" /><circle cx="4" cy="24" r="3.300" /></svg>
            </Extensions>
          </Toolbar>

          <Bookmarks>
            {bookmarks.map(([name, Icon, w, ls]) => (
              <Bookmark key={name} $w={w}><Icon /><BookmarkName $ls={ls}>{name}</BookmarkName></Bookmark>
            ))}
            <Bookmark $w={30}>
              <svg width="13" height="14" viewBox="0 0 13 14"><path d="M1 1L5.500 7L1 13M7 1L11.500 7L7 13" fill="none" stroke="#6b6b6b" strokeWidth="2" /></svg>
            </Bookmark>
            <Bookmark $w={250}><FolderIcon /><BookmarkName $ls={0.4}>Other Bookmarks</BookmarkName></Bookmark>
          </Bookmarks>

          <Page>
            <Title>Quantitative Section</Title>
            <Card>
              <Banner>Question 2</Banner>
              <Prompt>Select the cosine theorem formula</Prompt>
              {rows.map((row) => (
                <OptionRow key={row.first} $first={row.first}>
                  {row.options.map(([text, on]) => (
                    <Option key={text}><Radio $on={on} /><Formula>{renderFormula(text)}</Formula></Option>
                  ))}
                </OptionRow>
              ))}
              <Actions>
                <Action $w={280}>Submit &amp; Next Question</Action>
                <Action $w={292}>Cancel &amp; Clear Selection</Action>
              </Actions>
            </Card>
            <Copyright>©2016, Kalpana Tripathi.</Copyright>
          </Page>
        </Window>

        <Dock>
          {dock.map(([Icon, running], i) => (
            <DockItem key={i}><Icon />{running && <Running />}</DockItem>
          ))}
          <Separator />
          <DockItem><Trash /></DockItem>
        </Dock>
      </Desktop>
    </>
  );
}
